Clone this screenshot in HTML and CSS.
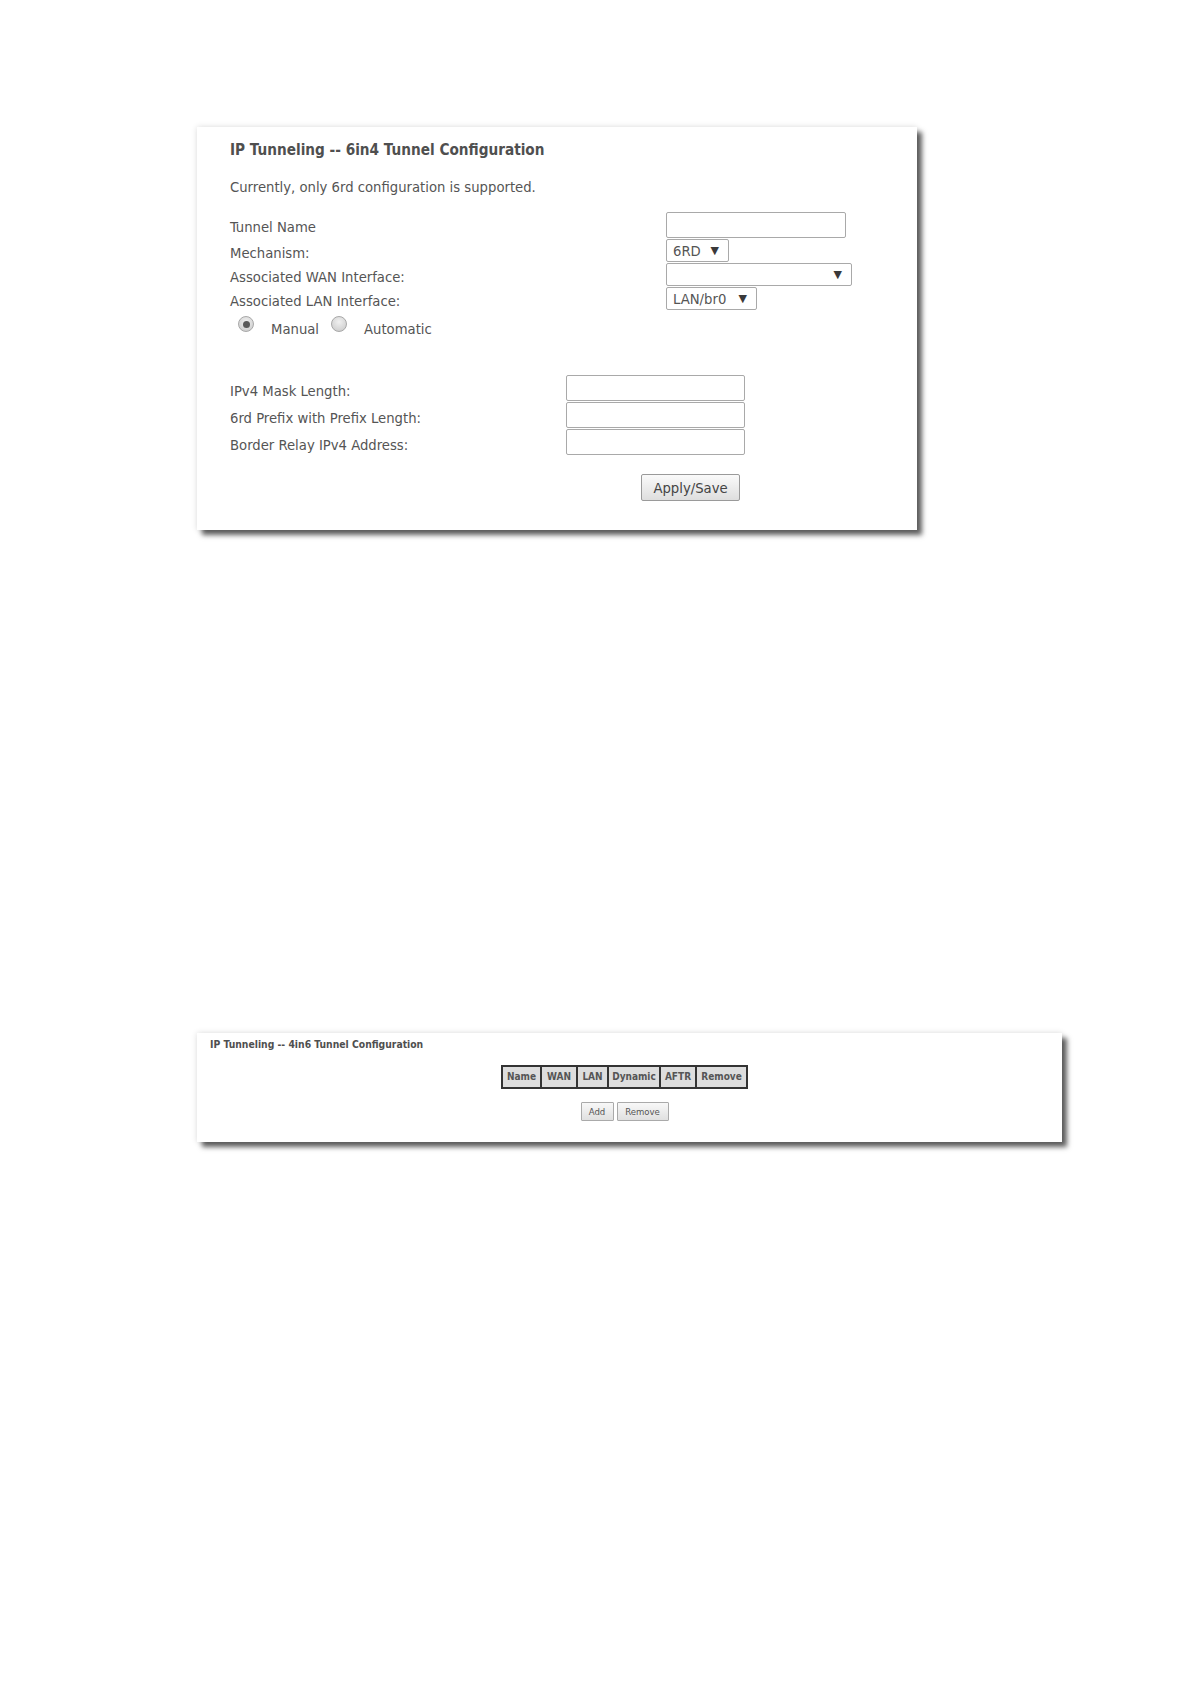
FILE: index.html
```html
<!DOCTYPE html>
<html>
<head>
<meta charset="utf-8">
<title>IP Tunneling</title>
<link rel="stylesheet" href="styles.css">
</head>
<body>
<div class="page">
  <section class="card card-6in4">
    <h2 class="title">IP Tunneling -- 6in4 Tunnel Configuration</h2>
    <p class="note">Currently, only 6rd configuration is supported.</p>

    <div class="form-top">
      <div class="row row-tall">
        <span class="label">Tunnel Name</span>
        <span class="textbox tb-name"></span>
      </div>
      <div class="row">
        <span class="label">Mechanism:</span>
        <span class="dropdown dd-mech"><span class="dd-text">6RD</span><span class="dd-arrow">&#9660;</span></span>
      </div>
      <div class="row">
        <span class="label">Associated WAN Interface:</span>
        <span class="dropdown dd-wan"><span class="dd-text"></span><span class="dd-arrow">&#9660;</span></span>
      </div>
      <div class="row">
        <span class="label">Associated LAN Interface:</span>
        <span class="dropdown dd-lan"><span class="dd-text">LAN/br0</span><span class="dd-arrow">&#9660;</span></span>
      </div>
    </div>

    <div class="radios">
      <span class="radio checked"></span>
      <span class="radio-label">Manual</span>
      <span class="radio"></span>
      <span class="radio-label">Automatic</span>
    </div>

    <div class="form-bottom">
      <div class="row">
        <span class="label">IPv4 Mask Length:</span>
        <span class="textbox tb-wide"></span>
      </div>
      <div class="row">
        <span class="label">6rd Prefix with Prefix Length:</span>
        <span class="textbox tb-wide"></span>
      </div>
      <div class="row">
        <span class="label">Border Relay IPv4 Address:</span>
        <span class="textbox tb-wide"></span>
      </div>
    </div>

    <div class="actions">
      <button class="btn btn-apply" type="button">Apply/Save</button>
    </div>
  </section>

  <section class="card card-4in6">
    <h2 class="title-small">IP Tunneling -- 4in6 Tunnel Configuration</h2>
    <div class="table-wrap">
      <table class="tunnels">
        <tr>
          <td class="c-name">Name</td>
          <td class="c-wan">WAN</td>
          <td class="c-lan">LAN</td>
          <td class="c-dyn">Dynamic</td>
          <td class="c-aftr">AFTR</td>
          <td class="c-rem">Remove</td>
        </tr>
      </table>
    </div>
    <div class="small-actions">
      <button class="btn-small btn-add" type="button">Add</button>
      <button class="btn-small btn-remove" type="button">Remove</button>
    </div>
  </section>
</div>
</body>
</html>
```

FILE: styles.css
```css
html, body {
  margin: 0;
  padding: 0;
  background: #ffffff;
}

body {
  font-family: "DejaVu Sans Condensed", "DejaVu Sans", sans-serif;
  color: #555555;
}

.page {
  box-sizing: border-box;
  min-height: 1684px;
  padding: 127px 0 0 197px;
  display: flex;
  flex-direction: column;
  align-items: flex-start;
}

.card {
  background: #ffffff;
  box-sizing: border-box;
  box-shadow: 5px 5px 5px rgba(0, 0, 0, 0.62), 0 0 6px rgba(0, 0, 0, 0.14);
}

/* ---------- 6in4 card ---------- */
.card-6in4 {
  width: 720px;
  height: 403px;
  padding: 14px 0 0 33px;
  font-size: 14.7px;
  line-height: 18px;
}

.title {
  margin: 0;
  font-size: 15.2px;
  line-height: 18px;
  font-weight: bold;
  color: #4f4f4f;
}

.note {
  margin: 19px 0 0 0;
}

.form-top {
  margin-top: 16px;
  display: flex;
  flex-direction: column;
  gap: 1px;
}

.row {
  display: flex;
  align-items: center;
}

.form-top .label {
  width: 436px;
  padding-top: 4px;
}

.form-bottom .label {
  width: 336px;
  padding-top: 5px;
}

.textbox {
  display: block;
  box-sizing: border-box;
  border: 1px solid #a9a9a9;
  border-radius: 2px;
  background: #fff;
  height: 26px;
}

.tb-name {
  width: 180px;
}

.tb-wide {
  width: 179px;
}

.dropdown {
  display: flex;
  align-items: center;
  box-sizing: border-box;
  height: 23px;
  border: 1px solid #a9a9a9;
  border-radius: 2px;
  background: #fff;
  padding: 0 0 0 6px;
  color: #555;
}

.dd-text {
  flex: 1;
  font-size: 14.7px;
  line-height: 18px;
}

.dd-arrow {
  font-size: 11px;
  color: #3a3a3a;
  font-family: "DejaVu Sans", sans-serif;
  padding-right: 9px;
}

.dd-mech { width: 63px; }
.dd-wan { width: 186px; }
.dd-lan { width: 91px; }

.radios {
  margin-top: 6px;
  display: flex;
  align-items: flex-start;
  height: 22px;
}

.radio {
  box-sizing: border-box;
  width: 16px;
  height: 16px;
  border-radius: 50%;
  border: 1px solid #a8a8a8;
  background: radial-gradient(circle at 50% 35%, #f0f0f0 0%, #d6d6d6 65%, #c4c4c4 100%);
  display: flex;
  align-items: center;
  justify-content: center;
}

.radio:first-child {
  margin-left: 8px;
}

.radio.checked::after {
  content: "";
  width: 7px;
  height: 7px;
  border-radius: 50%;
  background: #5a5a5a;
}

.radio-label {
  padding-top: 4px;
  margin-left: 17px;
  margin-right: 12px;
}

.form-bottom {
  margin-top: 37px;
  display: flex;
  flex-direction: column;
  gap: 1px;
}

.actions {
  margin-top: 19px;
  padding-left: 411px;
}

.btn {
  box-sizing: border-box;
  font-family: "DejaVu Sans Condensed", "DejaVu Sans", sans-serif;
  color: #444;
  border: 1px solid #9a9a9a;
  border-radius: 2px;
  background: linear-gradient(#fafafa, #dedede);
  padding: 0;
  margin: 0;
}

.btn-apply {
  width: 99px;
  height: 27px;
  font-size: 14.7px;
  line-height: 18px;
}

/* ---------- 4in6 card ---------- */
.card-4in6 {
  margin-top: 503px;
  width: 865px;
  height: 109px;
  padding: 5px 23px 0 13px;
  font-size: 10px;
  line-height: 12px;
}

.title-small {
  margin: 0;
  font-size: 10.3px;
  line-height: 12px;
  font-weight: bold;
  color: #4f4f4f;
}

.table-wrap {
  margin-top: 15px;
  display: flex;
  justify-content: center;
}

.tunnels {
  border-collapse: separate;
  border-spacing: 0;
  border: 1px solid #333333;
}

.tunnels td {
  border: 1px solid #333333;
  background: #dddddd;
  font-weight: bold;
  color: #555555;
  font-size: 10px;
  height: 22px;
  padding: 0;
  text-align: center;
  box-sizing: border-box;
}

.c-name { width: 39px; }
.c-wan { width: 36px; }
.c-lan { width: 31px; }
.c-dyn { width: 52px; }
.c-aftr { width: 36px; }
.c-rem { width: 51px; }

.small-actions {
  margin-top: 13px;
  display: flex;
  justify-content: center;
  gap: 3px;
}

.btn-small {
  box-sizing: border-box;
  height: 19px;
  font-family: "DejaVu Sans Condensed", "DejaVu Sans", sans-serif;
  font-size: 9.5px;
  color: #555;
  border: 1px solid #aaaaaa;
  border-radius: 1px;
  background: linear-gradient(#f8f8f8, #e0e0e0);
  padding: 0;
  margin: 0;
}

.btn-add { width: 33px; }
.btn-remove { width: 52px; }
```
